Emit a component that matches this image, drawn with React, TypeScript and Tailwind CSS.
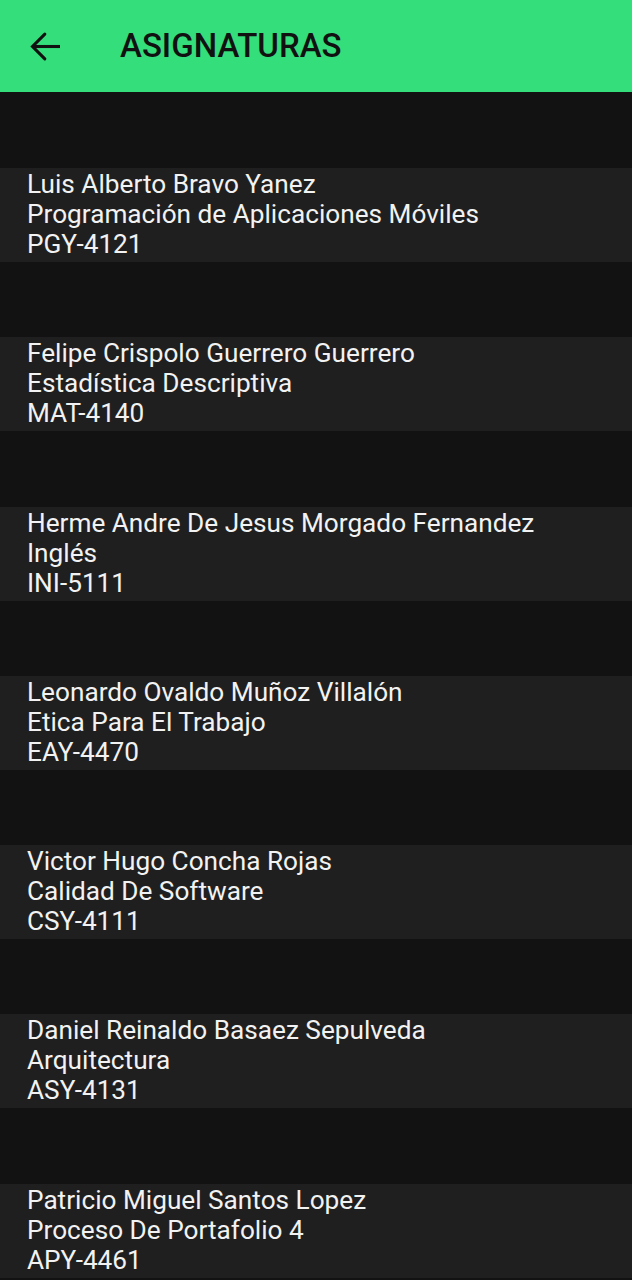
const asignaturas = [
  { profesor: "Luis Alberto Bravo Yanez", nombre: "Programación de Aplicaciones Móviles", sigla: "PGY-4121" },
  { profesor: "Felipe Crispolo Guerrero Guerrero", nombre: "Estadística Descriptiva", sigla: "MAT-4140" },
  { profesor: "Herme Andre De Jesus Morgado Fernandez", nombre: "Inglés", sigla: "INI-5111" },
  { profesor: "Leonardo Ovaldo Muñoz Villalón", nombre: "Etica Para El Trabajo", sigla: "EAY-4470" },
  { profesor: "Victor Hugo Concha Rojas", nombre: "Calidad De Software", sigla: "CSY-4111" },
  { profesor: "Daniel Reinaldo Basaez Sepulveda", nombre: "Arquitectura", sigla: "ASY-4131" },
  { profesor: "Patricio Miguel Santos Lopez", nombre: "Proceso De Portafolio 4", sigla: "APY-4461" },
];

export default function App() {
  return (
    <div className="min-h-[1280px] w-[632px] bg-[#121212] font-['Roboto',sans-serif]">
      <header className="flex h-[92px] items-center bg-[#33de7b]">
        <button type="button" className="ml-[25px] flex h-[41px] w-[41px] items-center justify-center" aria-label="Volver">
          <svg width="41" height="41" viewBox="0 0 24 24" fill="none" stroke="#111" strokeWidth="1.8">
            <path d="M20.5 12H4.8" />
            <path d="M11.6 4.8L4.4 12l7.2 7.2" strokeLinecap="round" />
          </svg>
        </button>
        <h1 className="ml-[54px] text-[33px] font-medium text-[#111]">ASIGNATURAS</h1>
      </header>

      <ul className="flex flex-col gap-[75.3px] pt-[76px]">
        {asignaturas.map((a) => (
          <li key={a.sigla} className="h-[94px] bg-[#1f1f1f] px-[27px] py-[1px] text-[26.2px] leading-[30px] text-[#f2f2f2]">
            <p>{a.profesor}</p>
            <p>{a.nombre}</p>
            <p>{a.sigla}</p>
          </li>
        ))}
      </ul>
    </div>
  );
}
